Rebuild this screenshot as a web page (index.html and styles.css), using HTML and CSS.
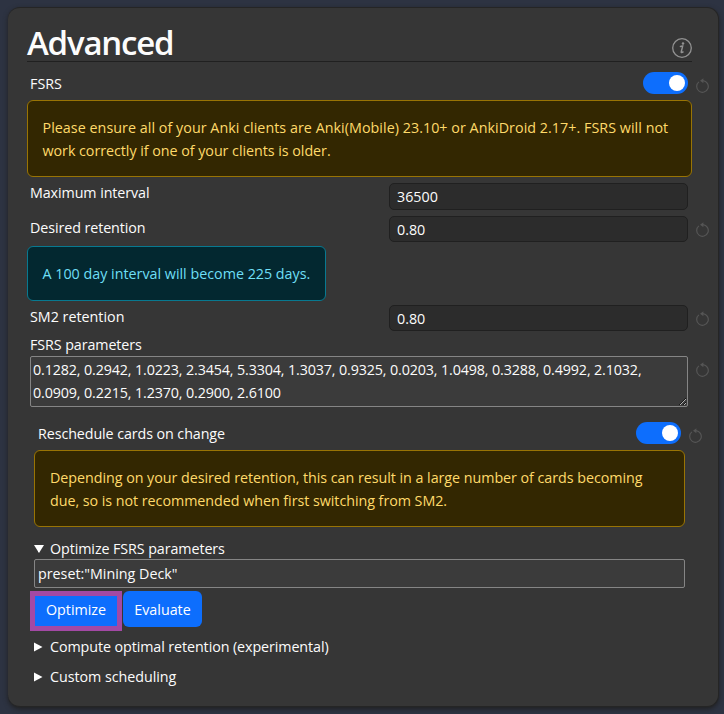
FILE: index.html
```html
<!DOCTYPE html>
<html lang="en">
<head>
<meta charset="utf-8">
<title>Advanced</title>
<link rel="stylesheet" href="styles.css">
</head>
<body>
<svg width="0" height="0" class="defs">
  <symbol id="reset" viewBox="0 0 14 15">
    <path d="M2.9 3.9A5.8 5.8 0 1 0 7 2.7" fill="none" stroke="currentColor" stroke-width="1.2"/>
    <path d="M7.4 0.2V5.2L4 2.7Z" fill="currentColor"/>
  </symbol>
</svg>
<main class="card">
  <header class="title">
    <h1>Advanced</h1>
    <svg class="help" viewBox="0 0 20 20"><circle cx="10" cy="10" r="9.3" fill="none" stroke="currentColor" stroke-width="1.3"/><circle cx="11" cy="5.5" r="1.25" fill="currentColor"/><path d="M7.8 8.7Q9.5 8.1 10.7 8L9.2 14Q9 15.2 11.5 13.7" fill="none" stroke="currentColor" stroke-width="1.4"/></svg>
  </header>
  <div class="row row-fsrs"><label>FSRS</label><span class="switch"></span><svg class="reset"><use href="#reset"/></svg></div>
  <div class="alert warning"><span class="loose">Please ensure all of your Anki clients are Anki(Mobile) 23.10+ or AnkiDroid 2.17+. FSRS will not</span><br><span class="snug">work correctly if one of your clients is older.</span></div>
  <div class="row row-max"><label class="tight">Maximum interval</label><input class="number" value="36500"></div>
  <div class="row row-desired"><label class="tight">Desired retention</label><input class="number" value="0.80"><svg class="reset"><use href="#reset"/></svg></div>
  <div class="alert info"><span>A 100 day interval will become 225 days.</span></div>
  <div class="row row-sm2"><label>SM2 retention</label><input class="number" value="0.80"><svg class="reset"><use href="#reset"/></svg></div>
  <div class="params-label"><label class="tight">FSRS parameters</label></div>
  <div class="params"><textarea spellcheck="false">0.1282, 0.2942, 1.0223, 2.3454, 5.3304, 1.3037, 0.9325, 0.0203, 1.0498, 0.3288, 0.4992, 2.1032,
0.0909, 0.2215, 1.2370, 0.2900, 2.6100</textarea><svg class="reset"><use href="#reset"/></svg></div>
  <section class="nested">
    <div class="row row-reschedule"><label class="tight">Reschedule cards on change</label><span class="switch"></span><svg class="reset"><use href="#reset"/></svg></div>
    <div class="alert warning"><span class="snug">Depending on your desired retention, this can result in a large number of cards becoming</span><br><span class="snug">due, so is not recommended when first switching from SM2.</span></div>
    <div class="summary first"><svg class="marker" viewBox="0 0 10 9"><path d="M0 .5H10L5 8.5Z"/></svg><span class="tight">Optimize FSRS parameters</span></div>
    <input class="search" value='preset:"Mining Deck"' spellcheck="false">
    <div class="buttons"><button class="highlight">Optimize</button><button>Evaluate</button></div>
    <div class="summary"><svg class="marker" viewBox="0 0 10 10"><path d="M0 .5V9.5L8.5 5Z"/></svg><span class="tight">Compute optimal retention (experimental)</span></div>
    <div class="summary"><svg class="marker" viewBox="0 0 10 10"><path d="M0 .5V9.5L8.5 5Z"/></svg><span class="snug">Custom scheduling</span></div>
  </section>
</main>
</body>
</html>
```
FILE: styles.css
```css
* { box-sizing: border-box; }
html { color-scheme: dark; }
body {
  margin: 0;
  height: 714px;
  padding: 7px 5px 7px 8px;
  overflow: hidden;
  background: #2d3342;
  color: #fcfcfc;
  font: 14.3px/22.5px "Open Sans", "Noto Sans", sans-serif;
}
.defs { position: absolute; }
.loose { letter-spacing: 0.04px; }
.snug { letter-spacing: -0.04px; }
.tight { letter-spacing: -0.09px; }
.card {
  height: 700px;
  padding-left: 19px;
  background: #363636;
  border: 1px solid #252525;
  border-width: 1px 1px 1px 0;
  border-radius: 12px;
  box-shadow: 0 2px 5px #202020;
}
.title {
  display: flex;
  justify-content: space-between;
  width: 665px;
  height: 54px;
  border-bottom: 1px solid #202020;
}
h1 { margin: 14px 0 0; font-size: 33px; line-height: 42px; font-weight: 600; letter-spacing: -1.2px; }
.help { width: 20px; height: 20px; margin-top: 30px; color: #929292; }
.row { display: flex; align-items: flex-start; padding-left: 3px; white-space: nowrap; }
.row label { flex: none; width: 359px; }
.reset { flex: none; width: 14px; height: 15px; margin-left: 8px; color: #555; }
.switch {
  flex: none;
  width: 45px;
  height: 22px;
  padding: 3px;
  margin-left: auto;
  border-radius: 11px;
  background: #0d6efd;
}
.switch::after { content: ""; display: block; width: 16px; height: 16px; margin-left: auto; border-radius: 50%; background: #fff; }
.row-fsrs { height: 38px; width: 683px; padding-top: 10px; }
.row-fsrs label { padding-top: 1px; }
.row-fsrs .reset { margin-top: 6px; }
.row-max { height: 36px; padding-top: 6px; }
.row-desired { height: 33px; padding-top: 3px; }
.row-sm2 { height: 33px; padding-top: 4px; }
.row-desired .reset, .row-sm2 .reset { margin-top: 6px; }
.row-desired label, .row-sm2 label { padding-top: 1px; }
.row-max label { margin-top: -1px; }
.number {
  width: 299px;
  height: 26px;
  padding: 1px 7px;
  border: 1px solid #202020;
  border-radius: 5px;
  background: #2c2c2c;
  color: #fcfcfc;
  font: inherit;
}
.row-max .number { height: 27px; }
.alert {
  width: 665px;
  height: 77px;
  padding: 15px 14.5px;
  border: 1px solid #997404;
  border-radius: 6px;
  background: #332701;
  color: #ffda6a;
  line-height: 23px;
  white-space: nowrap;
}
.info { width: 299px; height: 55px; border-color: #087990; background: #032830; color: #6edff6; }
.params-label { height: 22px; padding-left: 3px; }
.params { display: flex; padding-left: 3px; height: 51px; }
textarea {
  width: 658px;
  height: 51px;
  padding: 2px;
  overflow: hidden;
  border: 1px solid #858585;
  border-radius: 2px;
  background: #3b3b3b;
  color: #fcfcfc;
  font: inherit;
  letter-spacing: -0.13px;
  white-space: pre;
}
.params .reset { margin-top: 6px; }
.nested { padding-left: 7px; }
.nested .row { padding-left: 4px; width: 669px; height: 43px; padding-top: 15px; }
.nested .row label { padding-top: 1px; }
.nested .row .reset { margin-top: 6px; }
.nested .alert { width: 651px; padding-left: 15px; }
.summary { display: flex; align-items: center; height: 30px; white-space: nowrap; }
.summary.first { height: 32px; padding-top: 12px; }
.marker { width: 10px; height: 10px; margin-right: 6px; fill: #fff; }
.search {
  display: block;
  width: 651px;
  height: 29px;
  padding: 1px 3px;
  border: 1px solid #858585;
  border-radius: 2px;
  background: #3b3b3b;
  color: #fcfcfc;
  font: inherit;
}
.buttons { display: flex; gap: 1px; margin: 3px 0 1px -4px; height: 40px; }
button {
  width: 79px;
  height: 36px;
  padding: 2px 0 0;
  border: 0;
  border-radius: 6px;
  background: #0d6efd;
  color: #fff;
  font: inherit;
}
.highlight { width: 92px; height: 40px; padding: 0 0 2px; border: 5px solid #a349a4; border-radius: 0; }
```
